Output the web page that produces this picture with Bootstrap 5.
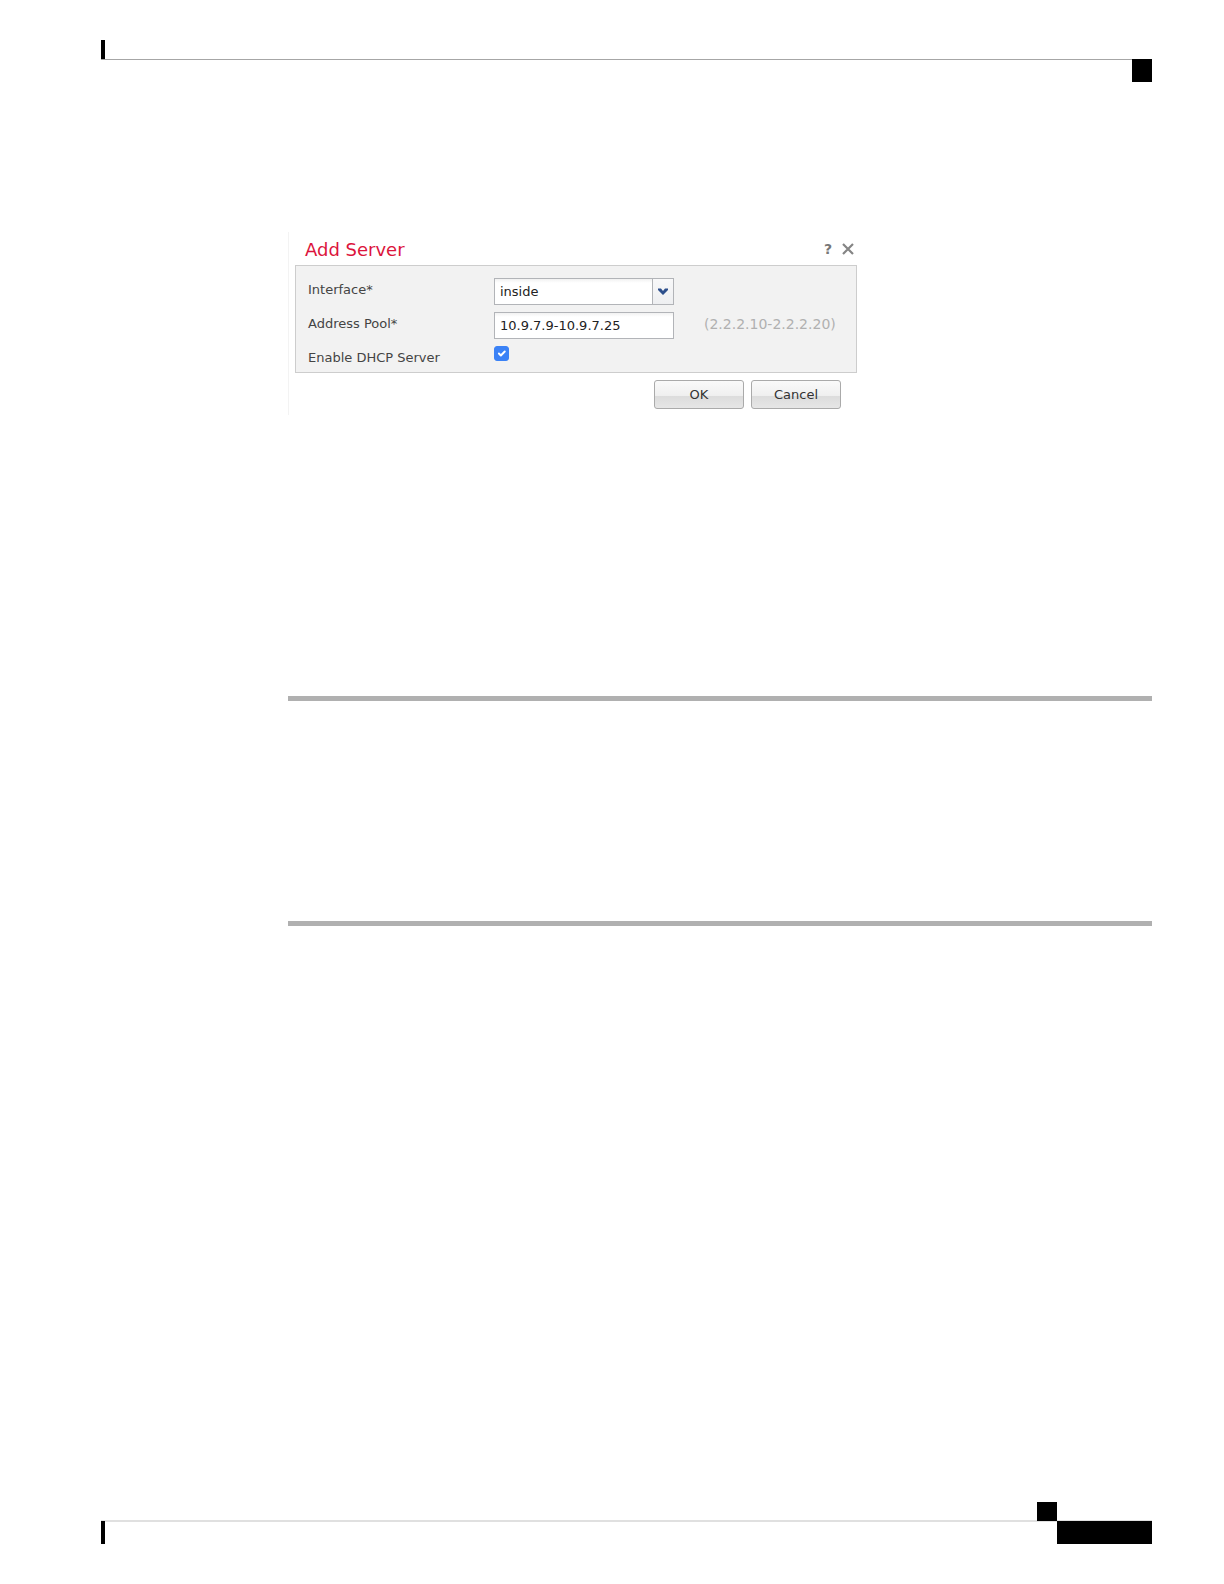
<!DOCTYPE html>
<html lang="en">
<head>
<meta charset="utf-8">
<meta name="viewport" content="width=device-width, initial-scale=1">
<title>Add Server</title>
<link href="https://cdn.jsdelivr.net/npm/bootstrap@5.3.0/dist/css/bootstrap.min.css" rel="stylesheet">
<style>
body { background: #fff; font-family: "DejaVu Sans", Verdana, sans-serif; }
.sheet { padding: 40px 72px 40px 101px; }
.tick { width: 4px; background: #000; }
.tick-top, .block-foot { height: 19px; }
.tick-foot { height: 23px; }
.head-line { border-bottom: 1px solid #a6a6a6; }
.foot-line { border-bottom: 2px solid #e0e0e0; margin-bottom: -1px; }
.block-sq { width: 20px; background: #000; }
.block-top { height: 23px; margin-top: -1px; }
.block-foot { margin-right: 95px; margin-bottom: -1px; }
.block-page { width: 95px; height: 23px; background: #000; }
.doc { margin-left: 187px; padding-top: 150px; }
.rule { height: 5px; margin: 0; border: 0; opacity: 1; background: #b0b0b0; }
.rule-first { margin-top: 281px; }
.rule-second { margin-top: 220px; }
.dlg { max-width: 569px; padding: 0 0 6px 6px; border-left: 1px solid #f3f3f3; }
.dlg-head { height: 33px; padding: 0 1px 0 10px; }
.dlg-title { font-size: 18px; line-height: 33px; padding-top: 2px; color: #dc143c; }
.tool { padding: 0; border: 0; background: none; color: #777; font-size: 14px; font-weight: 700; line-height: 16px; }
.tool svg { display: block; }
.panel { background: #f2f2f2; border: 1px solid #cdcdcd; padding: 12px 0 0 12px; font-size: 13px; height: 108px; }
.panel label { width: 186px; line-height: 24px; color: #444; }
.field { width: 180px; }
.box { height: 27px; padding: 0 5px; border: 1px solid #b2b4b8; border-radius: 0; color: #222; font-size: 13px; line-height: 25px; background: linear-gradient(#f1f1f1, #fff 4px); }
.trigger { position: absolute; top: 1px; right: 1px; width: 21px; height: 25px; border-left: 1px solid #b2b4b8; background: linear-gradient(#f8f8f9, #eeeff1); pointer-events: none; }
.hint { margin-left: 30px; color: #b0b0b0; font-size: 14px; line-height: 24px; }
.line-gap { margin-bottom: 7px; }
.panel .form-check-input { width: 15px; height: 15px; margin: 0; border-radius: 3px; }
.panel .form-check-input:checked { background-color: #3b82f6; border-color: #3b82f6; }
.acts { padding: 7px 16px 0 0; gap: 7px; }
.act { width: 90px; height: 29px; padding: 0; border: 1px solid #aaa; border-radius: 3px; color: #333; font-size: 13px; line-height: 27px; background: linear-gradient(#fafafa, #efefef 55%, #dcdcdc 56%, #e6e6e6); }
</style>
<script src="https://cdn.jsdelivr.net/npm/bootstrap@5.3.0/dist/js/bootstrap.bundle.min.js"></script>
</head>
<body>
<div class="sheet d-flex flex-column min-vh-100">
  <header>
    <div class="head-line"><div class="tick tick-top"></div></div>
    <div class="block-sq block-top ms-auto"></div>
  </header>
  <main class="doc">
    <form class="dlg">
      <div class="dlg-head d-flex align-items-center justify-content-between">
        <h1 class="dlg-title fw-normal m-0">Add Server</h1>
        <div class="d-flex align-items-center gap-2">
          <button type="button" class="tool" aria-label="Help">?</button>
          <button type="button" class="tool" aria-label="Close"><svg width="16" height="16" viewBox="0 0 16 16"><path d="M3 3l10 10M13 3L3 13" fill="none" stroke="#858585" stroke-width="2.200"/></svg></button>
        </div>
      </div>
      <div class="panel">
        <div class="d-flex line-gap">
          <label for="iface">Interface*</label>
          <div class="field position-relative">
            <select id="iface" class="box form-select"><option selected>inside</option></select>
            <span class="trigger d-flex align-items-center justify-content-center"><svg width="12" height="8" viewBox="0 0 12 8"><path d="M1 0.500h3l2 2.500 2-2.500h3v1.500L6 7 1 2z" fill="#2c4f8c"/></svg></span>
          </div>
        </div>
        <div class="d-flex line-gap">
          <label for="pool">Address Pool*</label>
          <div class="field"><input id="pool" type="text" class="box form-control" value="10.9.7.9-10.9.7.25"></div>
          <span class="hint">(2.2.2.10-2.2.2.20)</span>
        </div>
        <div class="d-flex">
          <label for="dhcp">Enable DHCP Server</label>
          <input id="dhcp" type="checkbox" class="form-check-input" checked>
        </div>
      </div>
      <div class="acts d-flex justify-content-end">
        <button type="button" class="act">OK</button>
        <button type="button" class="act">Cancel</button>
      </div>
    </form>
    <hr class="rule rule-first">
    <hr class="rule rule-second">
  </main>
  <footer class="mt-auto">
    <div class="block-sq block-foot ms-auto position-relative"></div>
    <div class="foot-line"></div>
    <div class="d-flex justify-content-between">
      <div class="tick tick-foot"></div>
      <div class="block-page"></div>
    </div>
  </footer>
</div>
</body>
</html>
